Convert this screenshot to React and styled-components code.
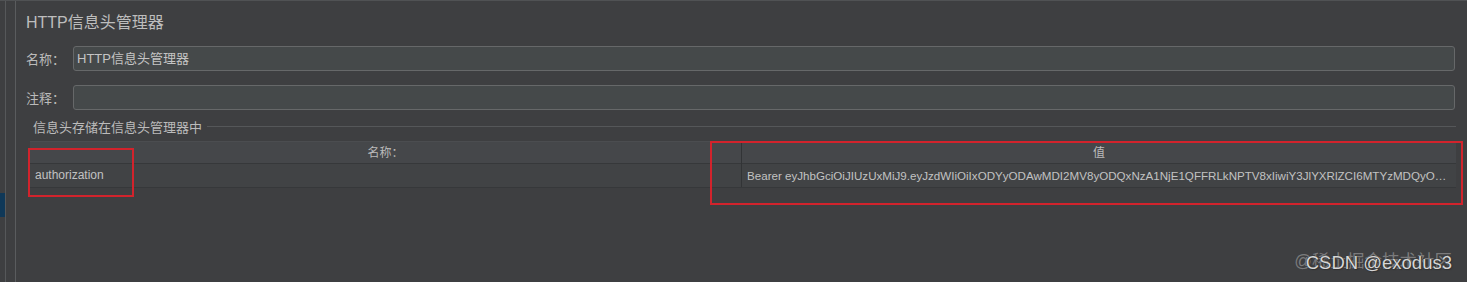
import React from "react";
import styled, { createGlobalStyle } from "styled-components";

const Global = createGlobalStyle`
  html, body { margin: 0; padding: 0; background: #3e3f41; }
  body { width: 1467px; height: 282px; overflow: hidden; }
`;

const FONT = `"Liberation Sans", Arial, "Noto Sans CJK SC", sans-serif`;

const Frame = styled.div`
  position: relative;
  display: flex;
  height: 282px;
  background: #3e3f41;
  font-family: ${FONT};
  color: #bbbbbb;
  border-top: 1px solid #505254;
  box-sizing: border-box;
`;

const SideStrip = styled.div`
  width: 5px;
  border-right: 1px solid #56585a;
  display: flex;
  flex-direction: column;
`;

const Selection = styled.div`
  margin-top: 192px;
  height: 24px;
  background: #0f3858;
`;

const Gutter = styled.div`
  width: 9px;
  border-right: 1px solid #5a5c5e;
`;

const Main = styled.div`
  flex: 1;
  padding: 11px 12px 0 10px;
  display: flex;
  flex-direction: column;
`;

const Title = styled.div`
  font-size: 16px;
  line-height: 22px;
  color: #bdbdbd;
  height: 22px;
  margin-bottom: 12px;
`;

const FieldRow = styled.div`
  display: flex;
  align-items: center;
  margin-bottom: 14px;
`;

const Label = styled.div`
  width: 47px;
  font-size: 13px;
  color: #bbbbbb;
`;

const Input = styled.div`
  flex: 1;
  height: 25px;
  box-sizing: border-box;
  border: 1px solid #666869;
  border-radius: 3px;
  background: #45494a;
  font-size: 13px;
  line-height: 23px;
  padding-left: 3px;
  color: #c4c4c4;
`;

const GroupHead = styled.div`
  display: flex;
  align-items: center;
  margin-top: -7px;
  padding-left: 7px;
  height: 18px;
  font-size: 13px;
  color: #bbbbbb;
  gap: 5px;
`;

const GroupLine = styled.div`
  flex: 1;
  height: 1px;
  background: #555759;
  margin-right: -1px;
`;

const Table = styled.div`
  margin: 6px -1px 0 4px;
  display: flex;
  flex-direction: column;
`;

const HeadRow = styled.div`
  display: grid;
  grid-template-columns: 711px 1fr;
  height: 23px;
  background: #45474a;
  border-top: 1px solid #4b4d50;
  border-bottom: 1px solid #36383a;
  box-sizing: border-box;
`;

const HeadCell = styled.div`
  font-size: 12px;
  line-height: 22px;
  text-align: center;
  color: #bbbbbb;
  border-left: ${(p) => (p.$divider ? "1px solid #323436" : "none")};
`;

const BodyRow = styled.div`
  display: grid;
  grid-template-columns: 711px 1fr;
  height: 24px;
  background: #414345;
  border-bottom: 1px solid #36383a;
  box-sizing: border-box;
`;

const Cell = styled.div`
  font-size: ${(p) => (p.$divider ? "11.6px" : "12px")};
  line-height: 23px;
  padding-left: 5px;
  padding-right: 8px;
  color: #c2c2c2;
  white-space: nowrap;
  overflow: hidden;
  text-overflow: ellipsis;
  border-left: ${(p) => (p.$divider ? "1px solid #323436" : "none")};
`;

const Highlight = styled.div`
  position: absolute;
  border: 2px solid #d2232c;
  box-sizing: border-box;
  pointer-events: none;
`;

const Watermark = styled.div`
  position: absolute;
  right: 15px;
  top: 250px;
  height: 22px;
  width: 170px;
  font-family: ${FONT};
`;

const WmBack = styled.div`
  position: absolute;
  right: 0;
  top: -1px;
  white-space: nowrap;
  font-size: 17.5px;
  line-height: 22px;
  color: rgba(210, 210, 210, 0.42);
`;

const WmFront = styled.div`
  position: absolute;
  right: 0;
  top: 1px;
  white-space: nowrap;
  font-size: 18.5px;
  line-height: 22px;
  color: #d6d6d6;
  text-shadow: 0 0 1px #222, 1px 1px 1px #333;
`;

const TOKEN =
  "Bearer eyJhbGciOiJIUzUxMiJ9.eyJzdWIiOiIxODYyODAwMDI2MV8yODQxNzA1NjE1QFFRLkNPTV8xIiwiY3JlYXRlZCI6MTYzMDQyODQ0NDE2MiwiZXhwIjoxNjMxMDMzMjQ0fQ.abcdefghijk";

export default function App() {
  return (
    <>
      <Global />
      <Frame>
        <SideStrip>
          <Selection />
        </SideStrip>
        <Gutter />
        <Main>
          <Title>HTTP信息头管理器</Title>
          <FieldRow>
            <Label>名称：</Label>
            <Input>HTTP信息头管理器</Input>
          </FieldRow>
          <FieldRow>
            <Label>注释：</Label>
            <Input />
          </FieldRow>
          <GroupHead>
            <span>信息头存储在信息头管理器中</span>
            <GroupLine />
          </GroupHead>
          <Table>
            <HeadRow>
              <HeadCell>名称：</HeadCell>
              <HeadCell $divider>值</HeadCell>
            </HeadRow>
            <BodyRow>
              <Cell>authorization</Cell>
              <Cell $divider>{TOKEN}</Cell>
            </BodyRow>
          </Table>
        </Main>
        <Highlight style={{ left: 28, top: 147, width: 106, height: 49 }} />
        <Highlight style={{ left: 710, top: 140, width: 753, height: 64 }} />
        <Watermark>
          <WmBack>@稀土掘金技术社区</WmBack>
          <WmFront>CSDN @exodus3</WmFront>
        </Watermark>
      </Frame>
    </>
  );
}
